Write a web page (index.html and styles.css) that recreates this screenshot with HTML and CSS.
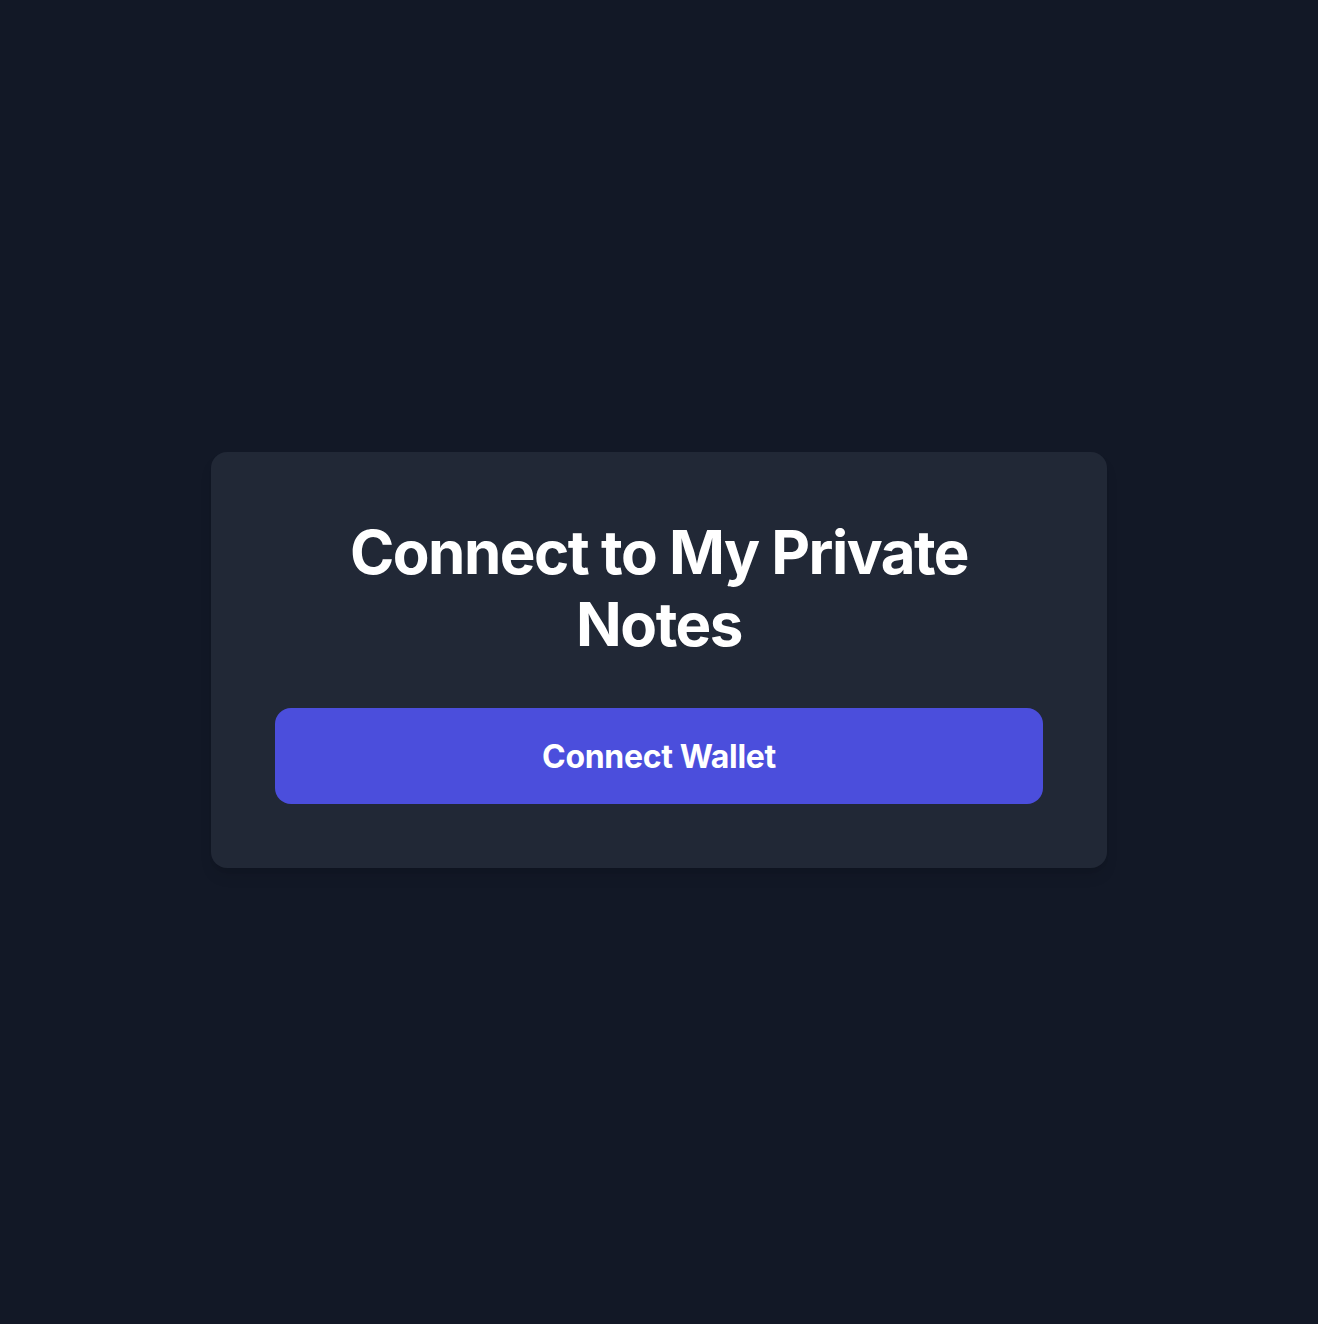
FILE: index.html
```html
<!DOCTYPE html>
<html lang="en">
<head>
<meta charset="utf-8">
<title>Connect to My Private Notes</title>
<link rel="stylesheet" href="styles.css">
</head>
<body>
<main class="page">
  <section class="card">
    <h1 class="title">Connect to My Private Notes</h1>
    <button class="connect-btn" type="button">Connect Wallet</button>
  </section>
</main>
</body>
</html>
```

FILE: styles.css
```css
* { box-sizing: border-box; }
html, body { margin: 0; padding: 0; }
body {
  background: #121826;
  font-family: Inter, "Noto Sans", sans-serif;
  color: #fff;
}
.page {
  min-height: 1324px;
  display: flex;
  align-items: center;
  justify-content: center;
  padding-bottom: 4px;
}
.card {
  width: 896px;
  background: #212836;
  border-radius: 16px;
  padding: 64px;
  box-shadow: 0 10px 15px -3px rgba(0,0,0,0.1), 0 4px 6px -4px rgba(0,0,0,0.1);
  display: flex;
  flex-direction: column;
  gap: 48px;
}
.title {
  margin: 0;
  text-align: center;
  font-size: 60px;
  line-height: 72px;
  font-weight: 700;
  letter-spacing: -0.025em;
}
.connect-btn {
  height: 96px;
  border: 0;
  border-radius: 16px;
  background: #4b4edc;
  color: #fff;
  font-family: Inter, "Noto Sans", sans-serif;
  font-size: 32px;
  font-weight: 700;
  letter-spacing: -0.01em;
  cursor: pointer;
}
```
